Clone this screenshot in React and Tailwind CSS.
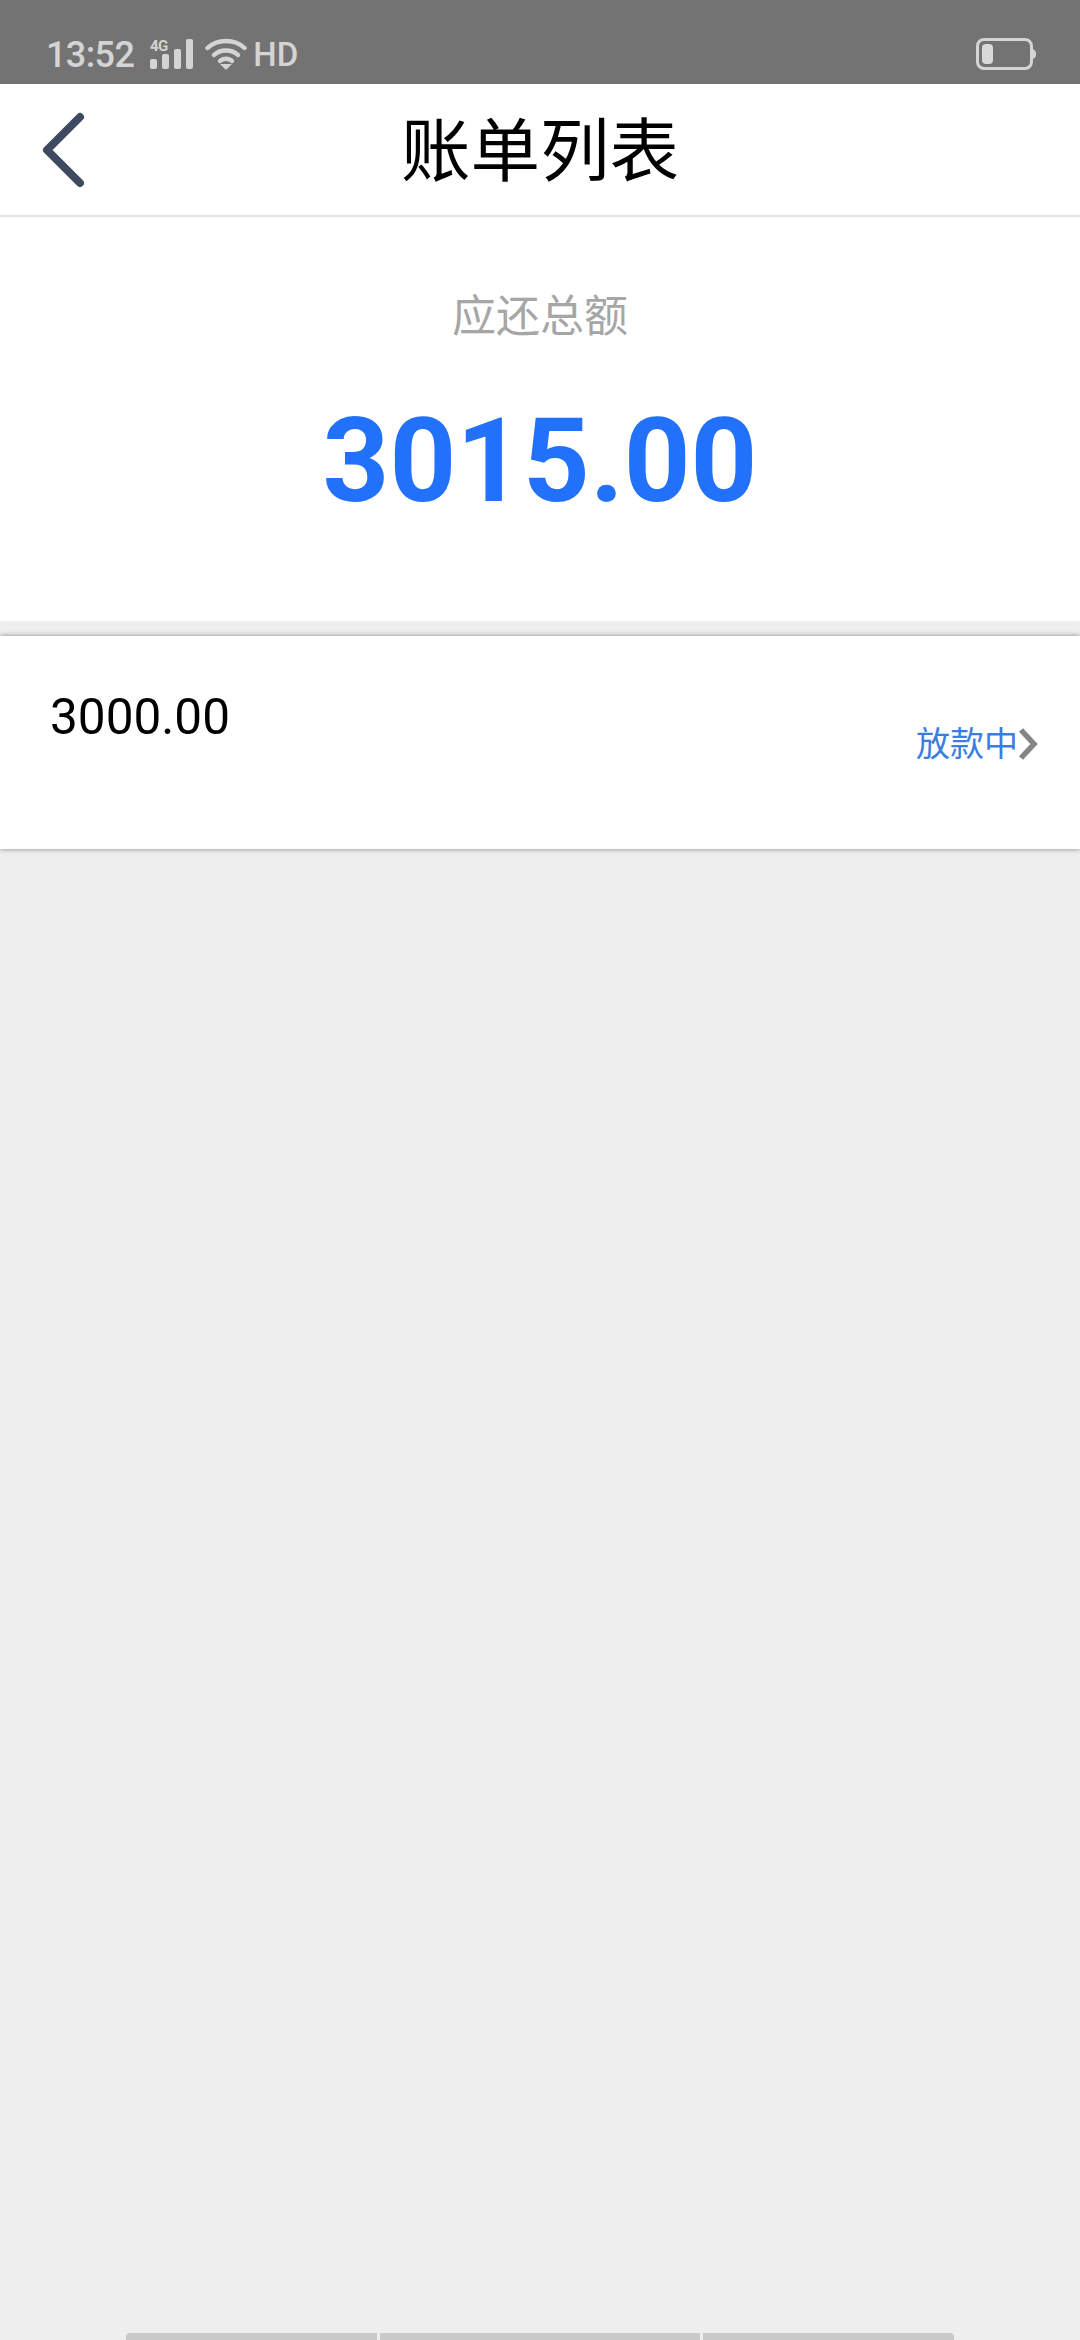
export default function App() {
  const cjk = { fontFamily: 'Roboto, "Noto Sans CJK SC", sans-serif' };
  return (
    <div style={cjk} className="relative flex h-[2340px] w-[1080px] flex-col overflow-hidden bg-[#eeeeee]">
      <div className="flex h-[84px] shrink-0 items-start justify-between bg-[#737373] pl-[46px] pr-[44px] pt-[37px] text-[#d4d4d4]">
        <div className="flex items-start">
          <span className="text-[36px] font-medium leading-[36px] tracking-[-0.6px]">13:52</span>
          <svg className="ml-[16px] mt-[2px] overflow-visible" width="44" height="30" viewBox="0 0 44 30" fill="#d4d4d4">
            <text x="0" y="12" fontSize="15" fontWeight="700" fontFamily="Roboto" letterSpacing="-0.5">4G</text>
            <rect x="0" y="20" width="7" height="10" rx="2" />
            <rect x="12" y="15" width="7" height="15" rx="2" />
            <rect x="24" y="10" width="7" height="20" rx="2" />
            <rect x="36" y="0" width="7" height="30" rx="2" />
          </svg>
          <svg className="ml-[11px] mt-[0px]" width="42" height="33" viewBox="0 0 42 33" fill="none" stroke="#d4d4d4" strokeWidth="4.5" strokeLinecap="round">
            <path d="M2.5 11C12 1.5 30 1.5 39.5 11" />
            <path d="M9 18C15 12 27 12 33 18" />
            <path d="M15 24C18 21 24 21 27 24" />
            <path d="M15 27H27L21 33Z" fill="#d4d4d4" stroke="none" />
          </svg>
          <span className="ml-[6px] text-[33px] font-medium leading-[36px]">HD</span>
        </div>
        <svg className="mt-[1px]" width="60" height="32" viewBox="0 0 60 32" fill="none">
          <rect x="1.5" y="1.5" width="54" height="29" rx="6.5" stroke="#d4d4d4" strokeWidth="3" />
          <rect x="6" y="6" width="11" height="20" rx="4" fill="#d9d9d9" />
          <path d="M57 11 C59.5 12 60 14 60 16 C60 18 59.5 20 57 21 Z" fill="#d4d4d4" />
        </svg>
      </div>

      <div className="relative flex h-[133px] shrink-0 items-center justify-center border-b-2 border-[#e2e2e2] bg-white pt-[6px]">
        <svg className="absolute left-[42px] top-[28px]" width="44" height="76" viewBox="0 0 44 76" fill="none">
          <path d="M38 5 L5 38 L38 71" stroke="#3f4a60" strokeWidth="8" strokeLinecap="round" strokeLinejoin="round" />
        </svg>
        <span className="text-[69.5px] leading-[90px] text-black">账单列表</span>
      </div>

      <div className="flex h-[404px] shrink-0 flex-col items-center bg-white pt-[68px]">
        <span className="text-[44px] leading-[64px] text-[#a6a6a6]">应还总额</span>
        <span className="mt-[44px] text-[116.5px] font-bold leading-[136px] text-[#2271fb]">3015.00</span>
      </div>

      <div className="mt-[15px] flex h-[213px] shrink-0 justify-between bg-white pl-[50px] pr-[42px] shadow-[0_0_5px_rgba(0,0,0,0.45)]">
        <span className="mt-[51px] text-[49.5px] leading-[60px] text-black">3000.00</span>
        <div className="mt-[84px] flex h-[48px] items-center">
          <span className="text-[34px] leading-[48px] text-[#3a7fe0]">放款中</span>
          <svg width="20" height="32" viewBox="0 0 20 32" fill="none">
            <path d="M3 2 L16 16 L3 30" stroke="#858585" strokeWidth="5.5" />
          </svg>
        </div>
      </div>

      <div className="absolute bottom-0 left-[126px] flex h-[7px] gap-[3px]">
        <div className="w-[251px] rounded-tl-[4px] bg-[#c9c9c9]" />
        <div className="w-[320px] bg-[#c9c9c9]" />
        <div className="w-[251px] rounded-tr-[4px] bg-[#c9c9c9]" />
      </div>
    </div>
  );
}
